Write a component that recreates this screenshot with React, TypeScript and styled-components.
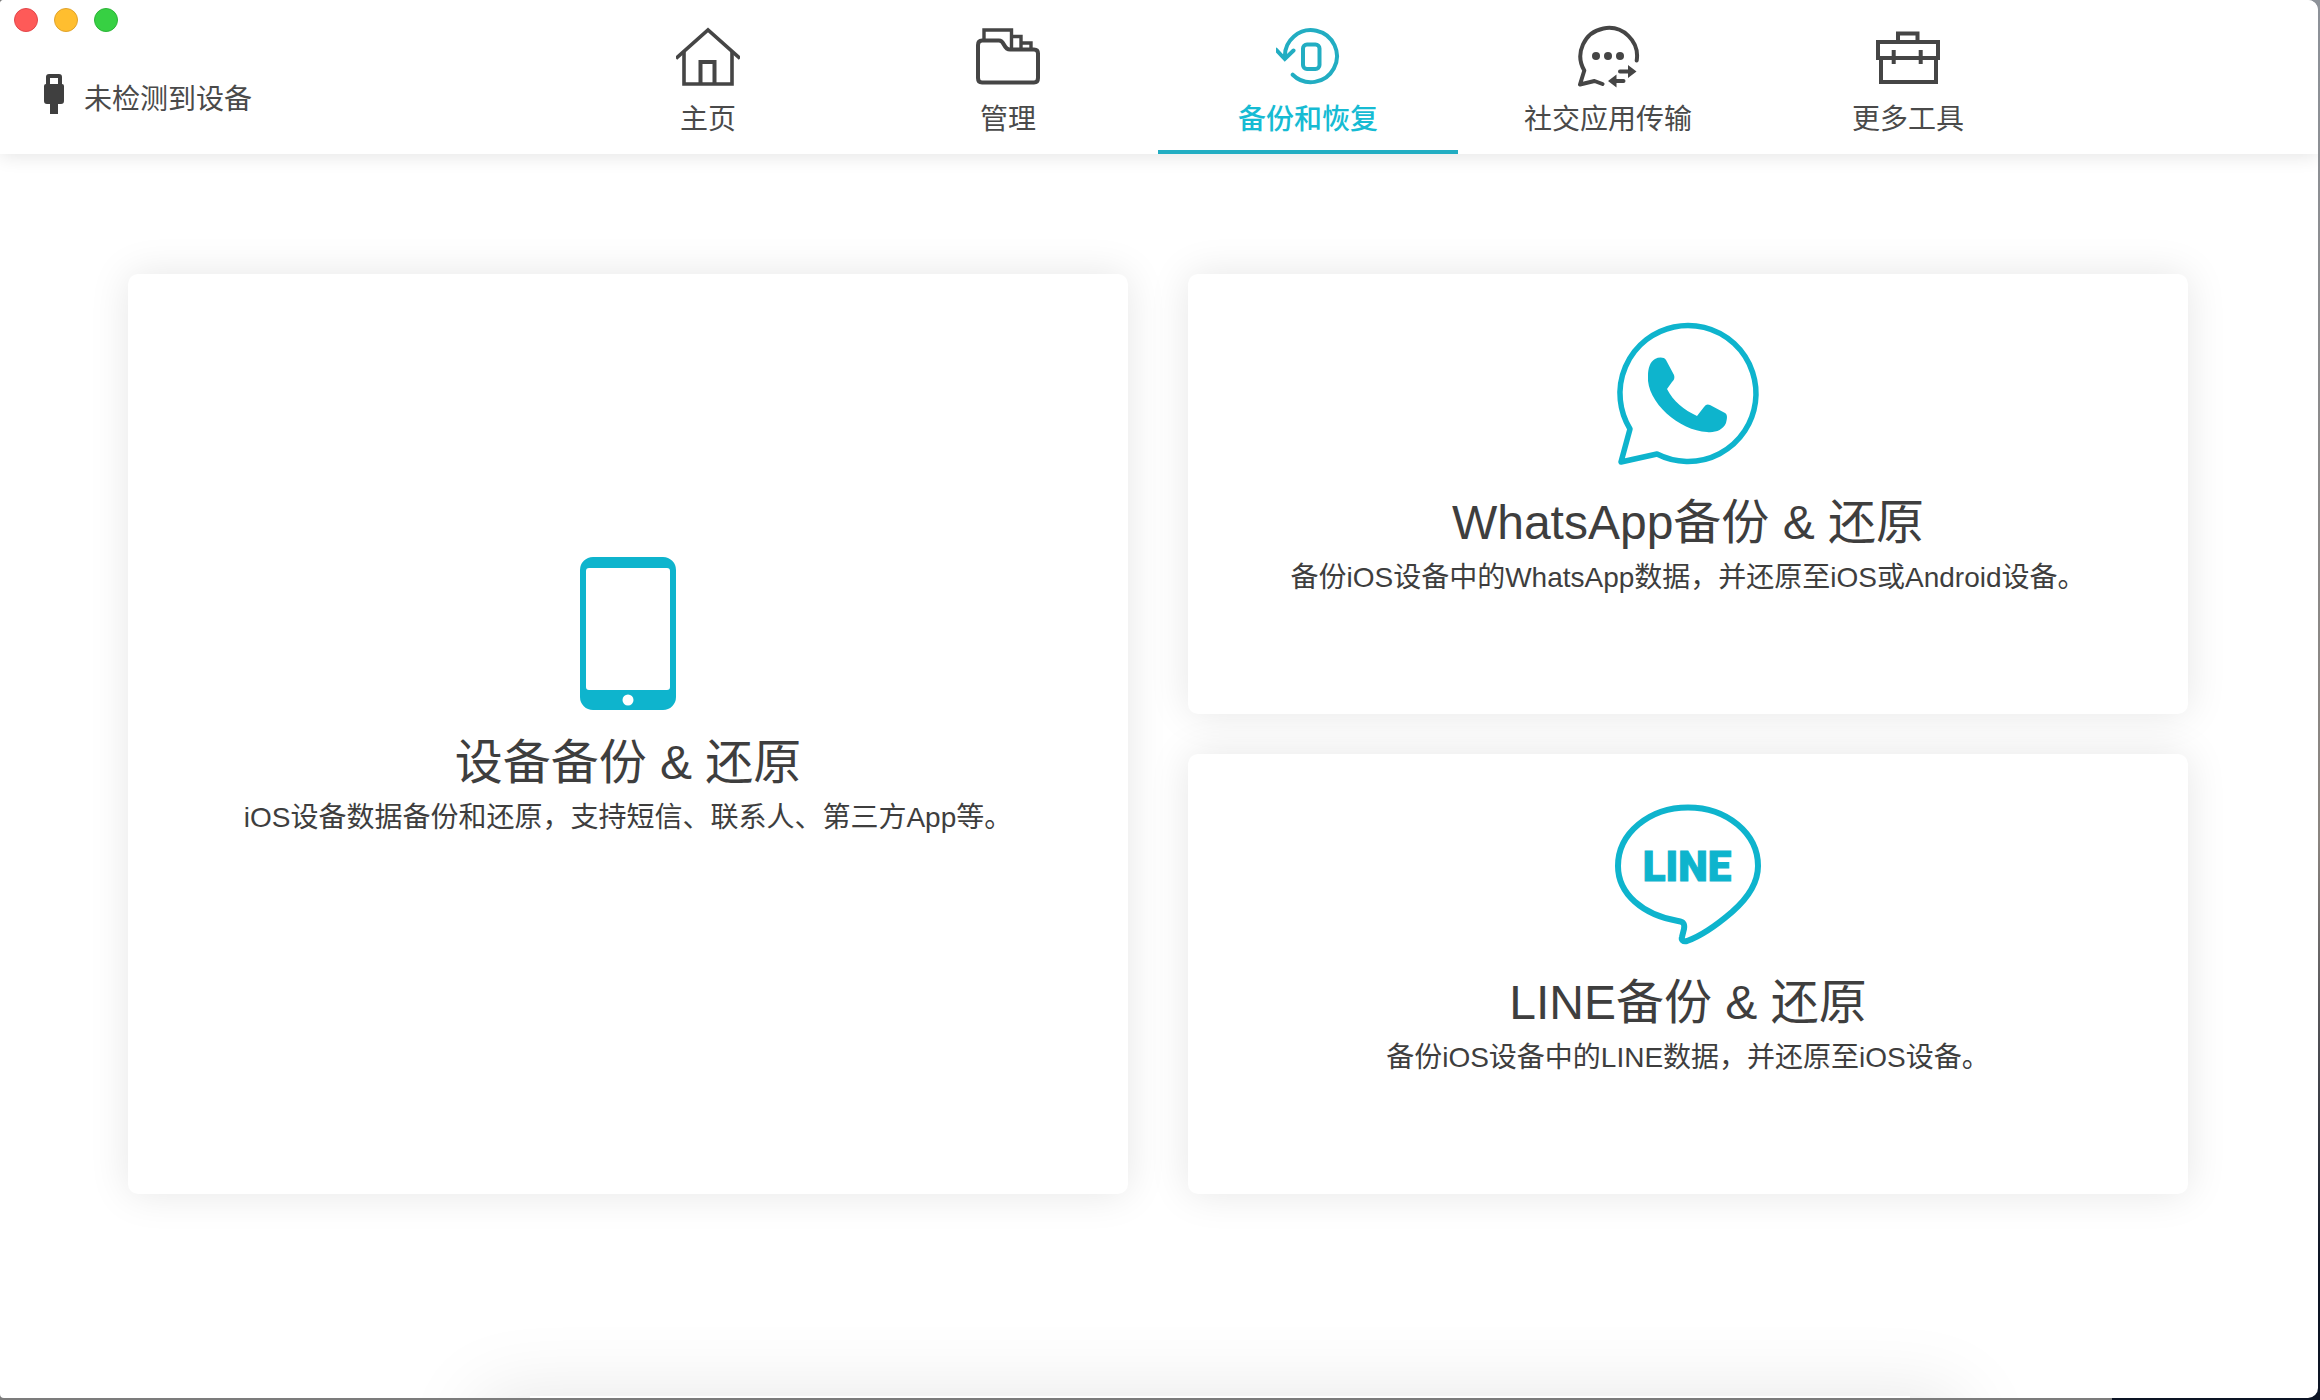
import React from 'react';
import styled, { createGlobalStyle } from 'styled-components';

const teal = '#0eb4cd';
const tealDark = '#22adc2';
const ink = '#3e3e3e';
const inkSoft = '#4a4a4a';

const GlobalStyle = createGlobalStyle`
  * { box-sizing: border-box; }
  html, body, #root { height: 100%; }
  body {
    margin: 0;
    font-family: "Liberation Sans", "Noto Sans CJK SC", sans-serif;
    color: ${ink};
  }
  button { font: inherit; color: inherit; border: 0; padding: 0; background: none; cursor: pointer; }
  svg { display: block; flex: none; }
`;

const Desktop = styled.div`
  min-height: 100%;
  display: flex;
  padding: 0 2px 2px 0;
  background:
    linear-gradient(#0c1424, #0c1424) right bottom / 208px 2px no-repeat,
    linear-gradient(#8d9299, #8a8580 60%, #0c1424 90%, #0c1424) right / 12px 100% no-repeat,
    #7c7c7c;
`;

const Window = styled.div`
  flex: 1;
  min-width: 0;
  display: flex;
  flex-direction: column;
  background: #fff;
  border-radius: 4px 10px 10px 4px;
  overflow: hidden;
`;

const Header = styled.header`
  display: flex;
  height: 154px;
  flex: none;
  background: #fff;
  box-shadow: 0 2px 18px rgba(0, 0, 0, 0.11);
`;

const Side = styled.div`
  flex: 0 1 558px;
  min-width: 260px;
  padding: 8px 14px;
`;

const Lights = styled.div`
  display: flex;
  gap: 16px;
`;

const Light = styled.button<{ $fill: string; $edge: string }>`
  width: 24px;
  height: 24px;
  border-radius: 50%;
  background: ${(p) => p.$fill};
  border: 1px solid ${(p) => p.$edge};
`;

const Status = styled.div`
  display: flex;
  align-items: flex-start;
  gap: 20px;
  padding: 42px 30px 0;
  color: ${inkSoft};
`;

const StatusText = styled.span`
  padding-top: 4px;
  font-size: 28px;
  line-height: 44px;
  white-space: nowrap;
`;

const Tabs = styled.nav`
  flex: 0 1 1500px;
  display: flex;
`;

const Tab = styled.button<{ $active?: boolean }>`
  flex: 1 1 0;
  display: flex;
  flex-direction: column;
  align-items: center;
  padding-top: 24px;
  gap: 8px;
  font-size: 28px;
  line-height: 48px;
  white-space: nowrap;
  color: ${(p) => (p.$active ? '#16bbd3' : inkSoft)};
  font-weight: ${(p) => (p.$active ? 500 : 400)};
  border-bottom: 4px solid ${(p) => (p.$active ? tealDark : 'transparent')};
  svg { color: ${(p) => (p.$active ? tealDark : '#454545')}; }
`;

const Main = styled.main`
  flex: 1;
  display: flex;
  flex-direction: column;
  justify-content: space-between;
`;

const Cards = styled.div`
  display: grid;
  grid-template-columns: 1fr 1fr;
  grid-template-rows: 440px 440px;
  gap: 40px 60px;
  padding: 120px 130px 40px 128px;
`;

const Card = styled.button<{ $tall?: boolean }>`
  grid-row: ${(p) => (p.$tall ? 'span 2' : 'auto')};
  display: flex;
  flex-direction: column;
  align-items: center;
  justify-content: center;
  padding-bottom: 74px;
  border-radius: 10px;
  background: #fff;
  box-shadow: 0 0 40px rgba(0, 0, 0, 0.1);
`;

const CardTitle = styled.span`
  margin-top: 16px;
  font-size: 48px;
  line-height: 66px;
`;

const CardText = styled.span`
  font-size: 28px;
  line-height: 44px;
`;

const BottomGlow = styled.div`
  height: 2px;
  margin: 0 408px 0 530px;
  box-shadow: 0 50px 80px 50px rgba(0, 0, 0, 0.1);
`;

const UsbIcon = () => (
  <svg width="20" height="40" viewBox="0 0 20 40" fill="#3f3f3f" aria-hidden="true">
    <path fillRule="evenodd" d="M5 0h10a3 3 0 0 1 3 3v7a2 2 0 0 1 2 2v15a3 3 0 0 1-3 3h-3v10H6V30H3a3 3 0 0 1-3-3V12a2 2 0 0 1 2-2V3a3 3 0 0 1 3-3Zm1 4v6h8V4Z" />
  </svg>
);

const NavSvg = ({ children }: { children: React.ReactNode }) => (
  <svg width="64" height="64" viewBox="0 0 64 64" fill="none" stroke="currentColor" strokeWidth="4" aria-hidden="true">
    {children}
  </svg>
);

const HomeIcon = () => (
  <NavSvg>
    <path d="M0 34.5 32 6l32 28.5" strokeWidth="3.6" />
    <path d="M8 28v32h48V28" strokeWidth="3.6" />
    <path d="M24.5 60V38h14v22" />
  </NavSvg>
);

const FolderIcon = () => (
  <NavSvg>
    <path d="M8 16V6h27.500v19M35.500 12.500H45V25M45 19h10v6" strokeWidth="3.400" />
    <path d="M6 16.500h17c6 0 4 9 11 9h24q4 0 4 4V54q0 4.500-4 4.500H6q-4 0-4-4.500V21q0-4.500 4-4.500Z" />
  </NavSvg>
);

const BackupIcon = () => (
  <NavSvg>
    <path d="M9 34A26 26 0 1 1 16.700 50.700" strokeLinecap="round" />
    <path d="m0 25.500 8.800 9.500 8.700-8.500" strokeLinecap="round" />
    <rect x="27" y="20.500" width="16.500" height="24.500" rx="4" />
  </NavSvg>
);

const ChatIcon = () => (
  <NavSvg>
    <path d="M60.700 36.500A28.300 28.300 0 1 0 8.300 46.500L4 60.500l14.500-3.500 8 3" strokeLinecap="round" strokeLinejoin="round" />
    <path d="M44 47.500h9M47.500 57H38" strokeLinecap="round" />
    <g fill="currentColor" stroke="none">
      <circle cx="20" cy="32" r="4" />
      <circle cx="32" cy="32" r="4" />
      <circle cx="44" cy="32" r="4" />
      <path d="m52 41 8.500 6.500L52 54ZM40.500 50.500 32 57l8.500 6.500Z" />
    </g>
  </NavSvg>
);

const ToolboxIcon = () => (
  <NavSvg>
    <path d="M2 18h60v16H2ZM22 18V9.500h19.500V18M5 34v24h55V34" />
    <path d="M17.700 26v14M44.700 26v14" />
  </NavSvg>
);

const TabletIcon = () => (
  <svg width="160" height="160" viewBox="0 0 160 160" fill={teal} aria-hidden="true">
    <path fillRule="evenodd" d="M45 3h70a13 13 0 0 1 13 13v127a13 13 0 0 1-13 13H45a13 13 0 0 1-13-13V16A13 13 0 0 1 45 3Zm-4 11a3 3 0 0 0-3 3v116a3 3 0 0 0 3 3h78a3 3 0 0 0 3-3V17a3 3 0 0 0-3-3Z" />
    <circle cx="80" cy="146" r="5.500" fill="#fff" />
  </svg>
);

const WhatsAppIcon = () => (
  <svg width="160" height="160" viewBox="0 0 160 160" aria-hidden="true">
    <path d="M22 115A68 68 0 1 1 49 140L13 148Z" fill="none" stroke={teal} strokeWidth="5.500" strokeLinejoin="round" />
    <path d="M47 45c4-2 9-2 11 1l8 15c1 3 0 5-2 7l-5 7c6 12 17 21 30 27l7-9c2-3 4-3 6-2l15 8c3 2 2 6 1 10-3 7-11 10-19 9C72 117 38 88 40 62c0-8 2-14 7-17Z" fill={teal} />
  </svg>
);

const LineText = styled.text`
  font-family: Roboto, "Liberation Sans", sans-serif;
  font-size: 42px;
  font-weight: 900;
  fill: ${teal};
  stroke: ${teal};
  stroke-width: 1px;
`;

const LineIcon = () => (
  <svg width="160" height="160" viewBox="0 0 160 160" aria-hidden="true">
    <path
      d="M80 13.500c39 0 70 26 70 58.500 0 17-10 32-26 46-14 12-31 24-45 29-4 1-6-1-5-4l2-8c1-6-1-7-6-8C35 121 10 100 10 72c0-32.500 31-58.500 70-58.500Z"
      fill="none"
      stroke={teal}
      strokeWidth="6"
    />
    <LineText x="79" y="87" textAnchor="middle">LINE</LineText>
  </svg>
);

const tabs = [
  { label: '主页', Icon: HomeIcon },
  { label: '管理', Icon: FolderIcon },
  { label: '备份和恢复', Icon: BackupIcon, active: true },
  { label: '社交应用传输', Icon: ChatIcon },
  { label: '更多工具', Icon: ToolboxIcon },
];

const cards = [
  { title: '设备备份 & 还原', text: 'iOS设备数据备份和还原，支持短信、联系人、第三方App等。', Icon: TabletIcon, tall: true },
  { title: 'WhatsApp备份 & 还原', text: '备份iOS设备中的WhatsApp数据，并还原至iOS或Android设备。', Icon: WhatsAppIcon },
  { title: 'LINE备份 & 还原', text: '备份iOS设备中的LINE数据，并还原至iOS设备。', Icon: LineIcon },
];

export default function App() {
  return (
    <>
      <GlobalStyle />
      <Desktop lang="zh-CN">
        <Window>
          <Header>
            <Side>
              <Lights>
                <Light $fill="#fe5a58" $edge="#e2464a" aria-label="关闭" />
                <Light $fill="#ffbe2f" $edge="#e0a32c" aria-label="最小化" />
                <Light $fill="#37d043" $edge="#2cb437" aria-label="全屏" />
              </Lights>
              <Status>
                <UsbIcon />
                <StatusText>未检测到设备</StatusText>
              </Status>
            </Side>
            <Tabs>
              {tabs.map(({ label, Icon, active }) => (
                <Tab key={label} $active={active} aria-current={active ? 'page' : undefined}>
                  <Icon />
                  {label}
                </Tab>
              ))}
            </Tabs>
          </Header>
          <Main>
            <Cards>
              {cards.map(({ title, text, Icon, tall }) => (
                <Card key={title} $tall={tall}>
                  <Icon />
                  <CardTitle>{title}</CardTitle>
                  <CardText>{text}</CardText>
                </Card>
              ))}
            </Cards>
            <BottomGlow />
          </Main>
        </Window>
      </Desktop>
    </>
  );
}
